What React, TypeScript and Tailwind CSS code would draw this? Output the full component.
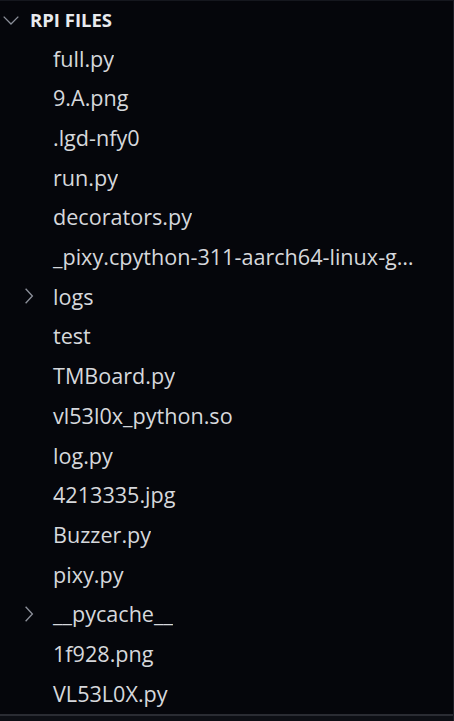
const files: { name: string; folder?: boolean }[] = [
  { name: 'full.py' },
  { name: '9.A.png' },
  { name: '.lgd-nfy0' },
  { name: 'run.py' },
  { name: 'decorators.py' },
  { name: '_pixy.cpython-311-aarch64-linux-gnu.so' },
  { name: 'logs', folder: true },
  { name: 'test' },
  { name: 'TMBoard.py' },
  { name: 'vl53l0x_python.so' },
  { name: 'log.py' },
  { name: '4213335.jpg' },
  { name: 'Buzzer.py' },
  { name: 'pixy.py' },
  { name: '__pycache__', folder: true },
  { name: '1f928.png' },
  { name: 'VL53L0X.py' },
]

function Chevron({ down }: { down?: boolean }) {
  return (
    <svg width="18" height="18" viewBox="0 0 16 16" fill="none" stroke="#8b8f99" strokeWidth="1.2">
      {down ? <path d="M1.5 5 8 11.5 14.5 5" /> : <path d="M5 1.5 11 8l-6 6.5" />}
    </svg>
  )
}

export default function App() {
  return (
    <div
      className="w-[454px] h-[721px] overflow-hidden bg-[#05060b] border-t border-t-[#15171e] border-r border-r-[#1c1e26] flex flex-col text-[#d6d8dc]"
      style={{ fontFamily: '"Open Sans", "Noto Sans", sans-serif' }}
    >
      <div className="h-[38px] flex items-center pl-[2px] shrink-0">
        <Chevron down />
        <span className="ml-[10px] text-[18.5px] font-bold text-[#e8eaee]">RPI FILES</span>
      </div>
      <div className="flex-1 flex flex-col">
        {files.map((f) => (
          <div key={f.name} className="h-[39.7px] flex items-center shrink-0 pr-[36px] relative">
            {f.folder && (
              <span className="absolute left-[20px] top-[10px]">
                <Chevron />
              </span>
            )}
            <span className="pl-[53px] truncate text-[21.6px]">{f.name}</span>
          </div>
        ))}
      </div>
      <div className="h-[11px] shrink-0 border-t-2 border-t-[#2a2c33] bg-[#0d0f15]" />
    </div>
  )
}
